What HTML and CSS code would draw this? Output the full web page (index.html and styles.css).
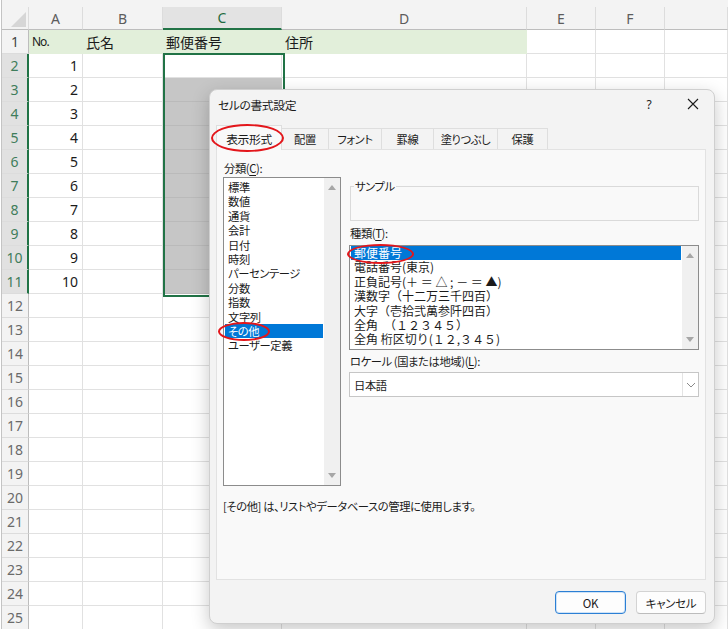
FILE: index.html
```html
<!DOCTYPE html>
<html lang="ja">
<head>
<meta charset="utf-8">
<title>セルの書式設定</title>
<link rel="stylesheet" href="styles.css">
</head>
<body>
<div class="app">
  <div class="sheet">
    <div class="row hdr">
      <div class="corner"><span class="tri"></span></div>
      <div class="ch">A</div><div class="ch">B</div><div class="ch csel">C</div><div class="ch">D</div><div class="ch">E</div><div class="ch">F</div><div class="ch"></div>
    </div>
    <div class="row"><div class="rh first">1</div><div class="c g"><span class="no">No.</span></div><div class="c g">氏名</div><div class="c g">郵便番号</div><div class="c g">住所</div><div class="c"></div><div class="c"></div><div class="c"></div></div>
    <div class="row"><div class="rh on">2</div><div class="c num">1</div><div class="c"></div><div class="c"></div><div class="c"></div><div class="c"></div><div class="c"></div><div class="c"></div></div>
    <div class="row"><div class="rh on">3</div><div class="c num">2</div><div class="c"></div><div class="c s"></div><div class="c"></div><div class="c"></div><div class="c"></div><div class="c"></div></div>
    <div class="row"><div class="rh on">4</div><div class="c num">3</div><div class="c"></div><div class="c s"></div><div class="c"></div><div class="c"></div><div class="c"></div><div class="c"></div></div>
    <div class="row"><div class="rh on">5</div><div class="c num">4</div><div class="c"></div><div class="c s"></div><div class="c"></div><div class="c"></div><div class="c"></div><div class="c"></div></div>
    <div class="row"><div class="rh on">6</div><div class="c num">5</div><div class="c"></div><div class="c s"></div><div class="c"></div><div class="c"></div><div class="c"></div><div class="c"></div></div>
    <div class="row"><div class="rh on">7</div><div class="c num">6</div><div class="c"></div><div class="c s"></div><div class="c"></div><div class="c"></div><div class="c"></div><div class="c"></div></div>
    <div class="row"><div class="rh on">8</div><div class="c num">7</div><div class="c"></div><div class="c s"></div><div class="c"></div><div class="c"></div><div class="c"></div><div class="c"></div></div>
    <div class="row"><div class="rh on">9</div><div class="c num">8</div><div class="c"></div><div class="c s"></div><div class="c"></div><div class="c"></div><div class="c"></div><div class="c"></div></div>
    <div class="row"><div class="rh on">10</div><div class="c num">9</div><div class="c"></div><div class="c s"></div><div class="c"></div><div class="c"></div><div class="c"></div><div class="c"></div></div>
    <div class="row"><div class="rh on">11</div><div class="c num">10</div><div class="c"></div><div class="c s"></div><div class="c"></div><div class="c"></div><div class="c"></div><div class="c"></div></div>
    <div class="row"><div class="rh">12</div><div class="c"></div><div class="c"></div><div class="c"></div><div class="c"></div><div class="c"></div><div class="c"></div><div class="c"></div></div>
    <div class="row"><div class="rh">13</div><div class="c"></div><div class="c"></div><div class="c"></div><div class="c"></div><div class="c"></div><div class="c"></div><div class="c"></div></div>
    <div class="row"><div class="rh">14</div><div class="c"></div><div class="c"></div><div class="c"></div><div class="c"></div><div class="c"></div><div class="c"></div><div class="c"></div></div>
    <div class="row"><div class="rh">15</div><div class="c"></div><div class="c"></div><div class="c"></div><div class="c"></div><div class="c"></div><div class="c"></div><div class="c"></div></div>
    <div class="row"><div class="rh">16</div><div class="c"></div><div class="c"></div><div class="c"></div><div class="c"></div><div class="c"></div><div class="c"></div><div class="c"></div></div>
    <div class="row"><div class="rh">17</div><div class="c"></div><div class="c"></div><div class="c"></div><div class="c"></div><div class="c"></div><div class="c"></div><div class="c"></div></div>
    <div class="row"><div class="rh">18</div><div class="c"></div><div class="c"></div><div class="c"></div><div class="c"></div><div class="c"></div><div class="c"></div><div class="c"></div></div>
    <div class="row"><div class="rh">19</div><div class="c"></div><div class="c"></div><div class="c"></div><div class="c"></div><div class="c"></div><div class="c"></div><div class="c"></div></div>
    <div class="row"><div class="rh">20</div><div class="c"></div><div class="c"></div><div class="c"></div><div class="c"></div><div class="c"></div><div class="c"></div><div class="c"></div></div>
    <div class="row"><div class="rh">21</div><div class="c"></div><div class="c"></div><div class="c"></div><div class="c"></div><div class="c"></div><div class="c"></div><div class="c"></div></div>
    <div class="row"><div class="rh">22</div><div class="c"></div><div class="c"></div><div class="c"></div><div class="c"></div><div class="c"></div><div class="c"></div><div class="c"></div></div>
    <div class="row"><div class="rh">23</div><div class="c"></div><div class="c"></div><div class="c"></div><div class="c"></div><div class="c"></div><div class="c"></div><div class="c"></div></div>
    <div class="row"><div class="rh">24</div><div class="c"></div><div class="c"></div><div class="c"></div><div class="c"></div><div class="c"></div><div class="c"></div><div class="c"></div></div>
    <div class="row"><div class="rh">25</div><div class="c"></div><div class="c"></div><div class="c"></div><div class="c"></div><div class="c"></div><div class="c"></div><div class="c"></div></div>
    <div class="selbox"></div>
  </div>

  <div class="dialog">
    <div class="titlebar">
      <span class="title">セルの書式設定</span>
      <span class="help">?</span>
      <span class="close"><svg width="12" height="12" viewBox="0 0 12 12"><path d="M1 1L11 11M11 1L1 11" stroke="#1b1b1b" stroke-width="1.1" fill="none"/></svg></span>
    </div>
    <div class="tabs">
      <div class="tab active">表示形式</div>
      <div class="tab t2">配置</div>
      <div class="tab t3">フォント</div>
      <div class="tab t4">罫線</div>
      <div class="tab t5">塗りつぶし</div>
      <div class="tab t6">保護</div>
    </div>
    <div class="panel">
      <div class="cols">
        <div class="catcol">
          <div class="lbl">分類(<u>C</u>):</div>
          <div class="listbox cat">
            <div class="items">
              <div class="item">標準</div>
              <div class="item">数値</div>
              <div class="item">通貨</div>
              <div class="item">会計</div>
              <div class="item">日付</div>
              <div class="item">時刻</div>
              <div class="item">パーセンテージ</div>
              <div class="item">分数</div>
              <div class="item">指数</div>
              <div class="item">文字列</div>
              <div class="item on">その他</div>
              <div class="item">ユーザー定義</div>
            </div>
            <div class="vscroll"><span class="up"></span><span class="dn"></span></div>
          </div>
        </div>
        <div class="rightcol">
          <fieldset class="sample"><legend>サンプル</legend><div class="sample-body"></div></fieldset>
          <div class="lbl kind">種類(<u>T</u>):</div>
          <div class="listbox types">
            <div class="items">
              <div class="item on">郵便番号</div>
              <div class="item">電話番号(東京)</div>
              <div class="item">正負記号(＋ ＝ △ ; － ＝ ▲)</div>
              <div class="item">漢数字（十二万三千四百）</div>
              <div class="item">大字（壱拾弐萬参阡四百）</div>
              <div class="item">全角　（１２３４５）</div>
              <div class="item">全角 桁区切り(１２,３４５)</div>
            </div>
            <div class="vscroll"><span class="up"></span><span class="dn"></span></div>
          </div>
          <div class="lbl locale">ロケール (国または地域)(<u>L</u>):</div>
          <div class="combo"><span class="val">日本語</span><span class="drop"><svg width="10" height="6" viewBox="0 0 10 6"><path d="M1 1L5 5L9 1" stroke="#8a8a8a" stroke-width="1" fill="none"/></svg></span></div>
        </div>
      </div>
      <p class="desc">[その他] は、リストやデータベースの管理に使用します。</p>
    </div>
    <div class="buttons">
      <button class="btn ok">OK</button>
      <button class="btn cancel">キャンセル</button>
    </div>
    <span class="ring ring-tab"></span>
    <span class="ring ring-cat"></span>
    <span class="ring ring-type"></span>
  </div>
</div>
</body>
</html>
```

FILE: styles.css
```css
* { box-sizing: border-box; }
html, body { margin: 0; padding: 0; background: #fff; overflow: hidden; }
body { width: 728px; height: 629px; font-family: "Noto Sans CJK JP", "Noto Sans", sans-serif; color: #1b1b1b; }
.app { position: relative; width: 728px; height: 629px; overflow: hidden; }

/* ---------- sheet ---------- */
.sheet { position: relative; margin-left: 1px; border-left: 1px solid #c4c4c4; }
.row { display: grid; grid-template-columns: 27px 54px 80px 119px 245px 69px 69px 63px; height: 24px; }
.hdr { height: 30px; padding-top: 7px; background: #f3f3f3; }
.corner { display: flex; align-items: flex-end; justify-content: flex-end; padding: 0 2px 2px 0; border-bottom: 1px solid #bdbdbd; border-right: 1px solid #dcdcdc; }
.tri { width: 0; height: 0; border-left: 15px solid transparent; border-bottom: 15px solid #d6d6d6; }
.ch { display: flex; align-items: center; justify-content: center; font-family: "Noto Sans", sans-serif; font-size: 14px; color: #5c5c5c; border-right: 1px solid #dcdcdc; border-bottom: 1px solid #bdbdbd; }
.ch.csel { background: #e3e3e3; color: #1e6b41; border-bottom: 2px solid #217346; }
.rh { display: flex; align-items: center; justify-content: center; font-family: "Noto Sans", sans-serif; font-size: 14px; color: #6a6a6a; background: #f3f3f3; border-right: 1px solid #bdbdbd; border-bottom: 1px solid #dcdcdc; }
.rh.first { color: #444; }
.rh.on { background: #e1e1e1; color: #3f7d5b; border-right: 2px solid #217346; }
.c { display: flex; align-items: center; padding: 0 3px; font-size: 14px; color: #1b1b1b; white-space: nowrap; overflow: hidden; border-right: 1px solid #e1e1e1; border-bottom: 1px solid #e1e1e1; }
.c.num { justify-content: flex-end; padding-right: 4px; font-family: "Noto Sans", sans-serif; }
.c.g { background: #e2efda; border-color: #e2efda; }
.c.s { background: #c6c6c6; border-right-color: #c6c6c6; border-bottom-color: #bababa; }
.no { font-family: "Noto Sans", sans-serif; font-size: 12px; letter-spacing: -1px; }
.selbox { position: absolute; left: 161px; top: 53px; width: 122px; height: 244px; border: 2px solid #217346; pointer-events: none; }

/* ---------- dialog ---------- */
.dialog { position: absolute; left: 209px; top: 89px; width: 506px; height: 535px; display: flex; flex-direction: column; padding: 0 8px 0 6px; background: #f3f3f3; border: 1px solid #cfcfcf; border-radius: 8px; box-shadow: 0 6px 18px rgba(0,0,0,0.22); font-family: "Noto Sans CJK JP", sans-serif; font-size: 11.3px; letter-spacing: -0.4px; font-feature-settings: "palt"; color: #1b1b1b; }
.titlebar { height: 28px; display: flex; align-items: center; padding-left: 2px; }
.title { flex: 1; font-size: 11.8px; }
.help { width: 20px; margin-right: 21px; text-align: center; font-family: "Noto Sans", sans-serif; font-size: 12px; }
.close { width: 26px; display: flex; justify-content: center; align-items: center; }
.tabs { display: flex; align-items: flex-end; height: 24px; margin-top: 7px; position: relative; z-index: 1; }
.tab { height: 21px; display: flex; align-items: center; justify-content: center; border: 1px solid #dedede; border-bottom: none; background: #f3f3f3; margin-right: -1px; }
.tab.active { width: 66px; height: 25px; margin-bottom: -1px; background: #f9f9f9; font-size: 11.8px; }
.t2 { width: 48px; }
.t3 { width: 54px; }
.t4 { width: 53px; }
.t5 { width: 65px; }
.t6 { width: 51px; }
.panel { height: 431px; background: #f9f9f9; border: 1px solid #e2e2e2; padding: 11px 6px 0 6px; }
.cols { display: flex; gap: 8px; align-items: flex-start; }
.catcol { width: 118px; }
.rightcol { flex: 1; }
.lbl { height: 14px; line-height: 14px; margin: 0 0 2px 1px; white-space: nowrap; }
.lbl u { text-decoration-thickness: 1px; text-underline-offset: 2px; }
.listbox { display: flex; background: #fff; border: 1px solid #8c8c8c; }
.listbox.cat { height: 309px; }
.listbox.types { height: 105px; margin-top: 5px; }
.items { flex: 1; padding: 0 1px; }
.cat .items { padding-top: 2px; }
.item { height: 14.4px; line-height: 14.4px; padding-left: 3px; white-space: nowrap; }
.types .item { font-size: 12px; letter-spacing: 0; font-feature-settings: normal; }
.item.on { background: #0078d7; color: #fff; }
.vscroll { width: 16px; background: #f0f0f0; display: flex; flex-direction: column; align-items: center; justify-content: space-between; padding: 7px 0; }
.up { width: 0; height: 0; border-left: 4px solid transparent; border-right: 4px solid transparent; border-bottom: 5px solid #a6a6a6; }
.dn { width: 0; height: 0; border-left: 4px solid transparent; border-right: 4px solid transparent; border-top: 5px solid #a6a6a6; }
.sample { margin: 18px 0 0 1px; padding: 0; width: 349px; border: 1px solid #dadada; }
.sample legend { margin-left: 3px; padding: 0 1px; line-height: 14px; }
.sample-body { height: 27px; }
.lbl.kind { margin-top: 5px; margin-bottom: 0; }
.lbl.locale { margin-top: 4px; margin-bottom: 0; }
.combo { margin-top: 4px; height: 25px; display: flex; background: #fff; border: 1px solid #c6c6c6; }
.combo .val { flex: 1; display: flex; align-items: center; padding-left: 4px; }
.combo .drop { width: 16px; display: flex; align-items: center; justify-content: center; border-left: 1px solid #e4e4e4; }
.desc { margin: 13px 0 0 0; line-height: 14px; white-space: nowrap; }
.buttons { display: flex; justify-content: flex-end; gap: 10px; margin-top: 11px; }
.btn { height: 23px; font-family: "Noto Sans CJK JP", "Noto Sans", sans-serif; font-size: 11.5px; letter-spacing: -0.3px; font-feature-settings: "palt"; color: #1b1b1b; background: #fdfdfd; border: 1px solid #d3d3d3; border-bottom-color: #bcbcbc; border-radius: 4px; padding: 0; }
.btn.ok { width: 71px; border: 1px solid #2b7fd4; box-shadow: inset 0 0 0 1px #cfe3f7; }
.btn.cancel { width: 70px; }
.ring { position: absolute; border: 2px solid #e3161b; border-radius: 50%; pointer-events: none; z-index: 2; }
.ring-tab { left: 1px; top: 34px; width: 73px; height: 28px; }
.ring-cat { left: 8px; top: 232px; width: 52px; height: 19px; }
.ring-type { left: 137px; top: 154px; width: 67px; height: 20px; }
```
